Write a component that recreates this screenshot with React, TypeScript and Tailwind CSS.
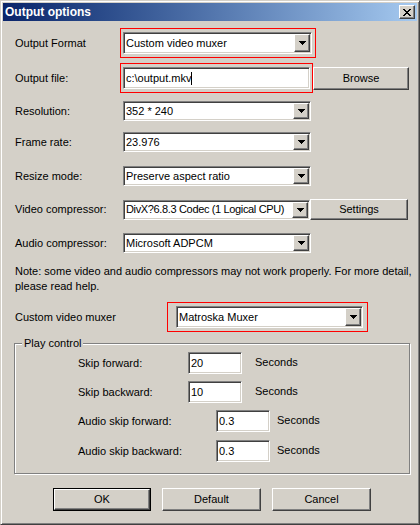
const sunken =
  'border border-t-[#808080] border-l-[#808080] border-r-white border-b-white shadow-[inset_1px_1px_0_#404040,inset_-1px_-1px_0_#d4d0c8] p-[1px]';
const raised =
  'border border-t-white border-l-white border-r-[#404040] border-b-[#404040] shadow-[inset_-1px_-1px_0_#808080] bg-[#d4d0c8]';

function Arrow() {
  return (
    <svg width="7" height="4" viewBox="0 0 7 4" shapeRendering="crispEdges">
      <rect x="0" y="0" width="7" height="1" fill="#000" />
      <rect x="1" y="1" width="5" height="1" fill="#000" />
      <rect x="2" y="2" width="3" height="1" fill="#000" />
      <rect x="3" y="3" width="1" height="1" fill="#000" />
    </svg>
  );
}

function CloseGlyph() {
  const rows = [
    [0, 0, 2], [6, 0, 2],
    [1, 1, 2], [5, 1, 2],
    [2, 2, 4],
    [3, 3, 2],
    [2, 4, 4],
    [1, 5, 2], [5, 5, 2],
    [0, 6, 2], [6, 6, 2],
  ];
  return (
    <svg width="8" height="7" viewBox="0 0 8 7" shapeRendering="crispEdges">
      {rows.map(([x, y, w], i) => (
        <rect key={i} x={x} y={y} width={w} height="1" fill="#000" />
      ))}
    </svg>
  );
}

function Combo({ value, className, textClass = '' }: { value: string; className: string; textClass?: string }) {
  return (
    <div className={`${sunken} bg-white flex items-stretch ${className}`}>
      <div className={`flex-1 flex items-center pl-[1px] overflow-hidden whitespace-nowrap ${textClass}`}>{value}</div>
      <div className={`${raised} w-[16px] flex items-center justify-center`}>
        <Arrow />
      </div>
    </div>
  );
}

function Field({ value, className }: { value: string; className: string }) {
  return (
    <div className={`${sunken} bg-white flex items-center pl-[2px] ${className}`}>{value}</div>
  );
}

function Button({ label, className }: { label: string; className: string }) {
  return (
    <div className={`${raised} flex items-center justify-center ${className}`}>{label}</div>
  );
}

function Row({ label, children, className }: { label: string; children: React.ReactNode; className: string }) {
  return (
    <div className={`flex items-center ${className}`}>
      <div className="w-[108px]">{label}</div>
      {children}
    </div>
  );
}

function SkipRow({ label, value, labelW, gap, className }: { label: string; value: string; labelW: string; gap: string; className: string }) {
  return (
    <div className={`flex items-center pl-[63px] ${className}`}>
      <div className={labelW}>{label}</div>
      <Field value={value} className="w-[54px] h-[22px]" />
      <div className={`${gap} -mt-[2px]`}>Seconds</div>
    </div>
  );
}

export default function App() {
  return (
    <div className="w-[420px] h-[525px] bg-[#d4d0c8] border border-t-[#d4d0c8] border-l-[#d4d0c8] border-r-[#404040] border-b-[#404040] shadow-[inset_1px_1px_0_#fff,inset_-1px_-1px_0_#808080] p-[2px] text-[11px] leading-[13px] text-black font-['Liberation_Sans',Arial,sans-serif] flex flex-col">
      {/* title bar */}
      <div className="h-[18px] bg-linear-to-r from-[#0a246a] to-[#a6caf0] flex items-center justify-between pl-[2px] pr-[2px]">
        <span className="text-white font-bold text-[12px]">Output options</span>
        <div className={`${raised} w-[16px] h-[14px] flex items-center justify-center`}>
          <CloseGlyph />
        </div>
      </div>

      <div className="flex flex-col pl-[12px]">
        {/* output format */}
        <div className="flex items-center mt-[7px] h-[30px]">
          <div className="w-[105px]">Output Format</div>
          <div className="border border-[#ff0000] pt-[3px] pb-[3px] pl-[2px] pr-[3px] h-[30px] w-[196px]">
            <Combo value="Custom video muxer" className="h-[22px] w-full" />
          </div>
        </div>

        {/* output file */}
        <div className="flex items-center mt-[5px] h-[30px]">
          <div className="w-[105px]">Output file:</div>
          <div className="border border-[#ff0000] pt-[3px] pb-[3px] pl-[2px] pr-[2px] h-[30px] w-[193px]">
            <div className={`${sunken} bg-white flex items-center pl-[2px] h-full`}>
              c:\output.mkv
              <span className="inline-block w-px h-[13px] bg-black" />
            </div>
          </div>
          <Button label="Browse" className="w-[96px] h-[23px]" />
        </div>

        <Row label="Resolution:" className="mt-[8px] h-[20px]">
          <Combo value="352 * 240" className="w-[188px] h-[20px]" />
        </Row>
        <Row label="Frame rate:" className="mt-[11px] h-[20px]">
          <Combo value="23.976" className="w-[188px] h-[20px]" />
        </Row>
        <Row label="Resize mode:" className="mt-[14px] h-[20px]">
          <Combo value="Preserve aspect ratio" className="w-[188px] h-[20px]" />
        </Row>
        <Row label="Video compressor:" className="mt-[13px] h-[21px]">
          <Combo
            value="DivX?6.8.3 Codec (1 Logical CPU)"
            className="w-[187px] h-[20px]"
            textClass="tracking-[-0.35px]"
          />
          <Button label="Settings" className="w-[98px] h-[21px]" />
        </Row>
        <Row label="Audio compressor:" className="mt-[13px] h-[20px]">
          <Combo value="Microsoft ADPCM" className="w-[188px] h-[20px]" />
        </Row>

        <p className="mt-[11px] leading-[15px]">
          Note: some video and audio compressors may not work properly. For more detail,
          <br />
          please read help.
        </p>

        {/* custom muxer */}
        <div className="flex items-center mt-[8px] h-[30px]">
          <div className="w-[152px]">Custom video muxer</div>
          <div className="border border-[#ff0000] pt-[3px] pb-[3px] pl-[8px] pr-[4px] h-[30px] w-[201px]">
            <Combo value="Matroska Muxer" className="h-[22px] w-full" />
          </div>
        </div>

        {/* play control */}
        <div className="relative -ml-px mt-[11px] w-[396px] h-[131px] border border-[#808080] shadow-[1px_1px_0_#fff,inset_1px_1px_0_#fff] flex flex-col">
          <span className="absolute left-[7px] -top-[7px] bg-[#d4d0c8] px-[2px]">Play control</span>
          <SkipRow label="Skip forward:" value="20" labelW="w-[110px]" gap="ml-[13px]" className="mt-[8px]" />
          <SkipRow label="Skip backward:" value="10" labelW="w-[110px]" gap="ml-[13px]" className="mt-[7px]" />
          <SkipRow label="Audio skip forward:" value="0.3" labelW="w-[138px]" gap="ml-[7px]" className="mt-[7px]" />
          <SkipRow label="Audio skip backward:" value="0.3" labelW="w-[138px]" gap="ml-[7px]" className="mt-[8px]" />
        </div>

        {/* buttons */}
        <div className="flex items-center mt-[14px] pl-[38px]">
          <div className="border border-black">
            <Button label="OK" className="w-[96px] h-[21px]" />
          </div>
          <Button label="Default" className="ml-[11px] w-[99px] h-[23px]" />
          <Button label="Cancel" className="ml-[11px] w-[99px] h-[23px]" />
        </div>
      </div>
    </div>
  );
}
